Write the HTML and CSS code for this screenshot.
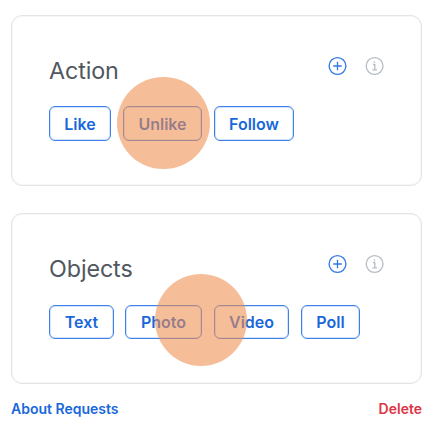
FILE: index.html
```html
<!DOCTYPE html>
<html lang="en">
<head>
<meta charset="utf-8">
<title>Requests</title>
<link rel="stylesheet" href="styles.css">
</head>
<body>
<svg class="sprite" aria-hidden="true">
  <symbol id="add" viewBox="0 0 20 20"><circle cx="9.5" cy="10" r="8.4"/><path d="M9.5 5.7v8.6M5.2 10h8.6"/></symbol>
  <symbol id="info" viewBox="0 0 20 20"><circle cx="9.6" cy="10" r="8.4"/><path d="M7.9 8.5h1.9v5.2M7.4 13.9h4.6M8.9 6h1.2"/></symbol>
</svg>
<main class="page">
  <section class="card">
    <header class="card-header">
      <h2 class="title">Action</h2>
      <div class="tools">
        <svg class="icon icon-add"><use href="#add"/></svg>
        <svg class="icon icon-info"><use href="#info"/></svg>
      </div>
    </header>
    <div class="chips">
      <button class="chip like">Like</button>
      <button class="chip unlike">Unlike</button>
      <button class="chip follow">Follow</button>
    </div>
    <span class="touch touch-action"></span>
  </section>
  <section class="card">
    <header class="card-header">
      <h2 class="title">Objects</h2>
      <div class="tools">
        <svg class="icon icon-add"><use href="#add"/></svg>
        <svg class="icon icon-info"><use href="#info"/></svg>
      </div>
    </header>
    <div class="chips chips-objects">
      <button class="chip text">Text</button>
      <button class="chip photo">Photo</button>
      <button class="chip video">Video</button>
      <button class="chip poll">Poll</button>
    </div>
    <span class="touch touch-objects"></span>
  </section>
  <footer class="footer">
    <a class="about">About Requests</a>
    <a class="delete">Delete</a>
  </footer>
</main>
</body>
</html>
```
FILE: styles.css
```css
* { box-sizing: border-box; }
body {
  margin: 0;
  background: #fff;
  font-family: Inter, sans-serif;
}
.sprite { position: absolute; width: 0; height: 0; }
.page {
  width: 438px;
  height: 426px;
  padding: 15px 16px 0 11px;
  display: flex;
  flex-direction: column;
}
.card {
  position: relative;
  height: 171px;
  margin-bottom: 27px;
  padding: 40px 36px 0 37px;
  border: 1px solid #e4e4e4;
  border-radius: 11px;
  box-shadow: inset 0 0 0 1px #f7f7f7;
}
.card-header {
  display: flex;
  justify-content: space-between;
  height: 50px;
}
.title {
  margin: 0;
  color: #505760;
  font-size: 23.3px;
  font-weight: 400;
  line-height: 30px;
  letter-spacing: -.1px;
}
.tools { display: flex; gap: 17.5px; }
.icon {
  width: 20px;
  height: 20px;
  fill: none;
  stroke-width: 1.35;
}
.icon-add { stroke: #3478e5; }
.icon-info { stroke: #b6bec8; }
.chips { display: flex; gap: 12px; }
.chip {
  height: 35px;
  padding: 0;
  border: 1px solid #3c80e8;
  border-radius: 6px;
  box-shadow: inset 0 0 0 1px #d3e3fb;
  background: #fff;
  color: #1868db;
  font: 600 16px/32px Inter, sans-serif;
}
.like { width: 62px; }
.unlike { width: 79px; }
.follow { width: 80px; }
.chips-objects { padding-top: 1px; }
.chips-objects .chip { height: 34px; }
.text { width: 65px; }
.photo { width: 77px; margin-left: -1px; }
.video { width: 75px; }
.poll { width: 59px; }
.touch {
  position: absolute;
  width: 92.5px;
  height: 92.5px;
  border-radius: 50%;
  background: rgba(240, 143, 77, .58);
}
.touch-action { left: 105px; top: 60.5px; }
.touch-objects { left: 142.5px; top: 59.5px; }
.footer {
  display: flex;
  justify-content: space-between;
  margin-top: -11px;
  font-size: 14px;
  font-weight: 600;
  line-height: 18px;
}
.about { color: #1868db; }
.delete { color: #dc3545; }
```
